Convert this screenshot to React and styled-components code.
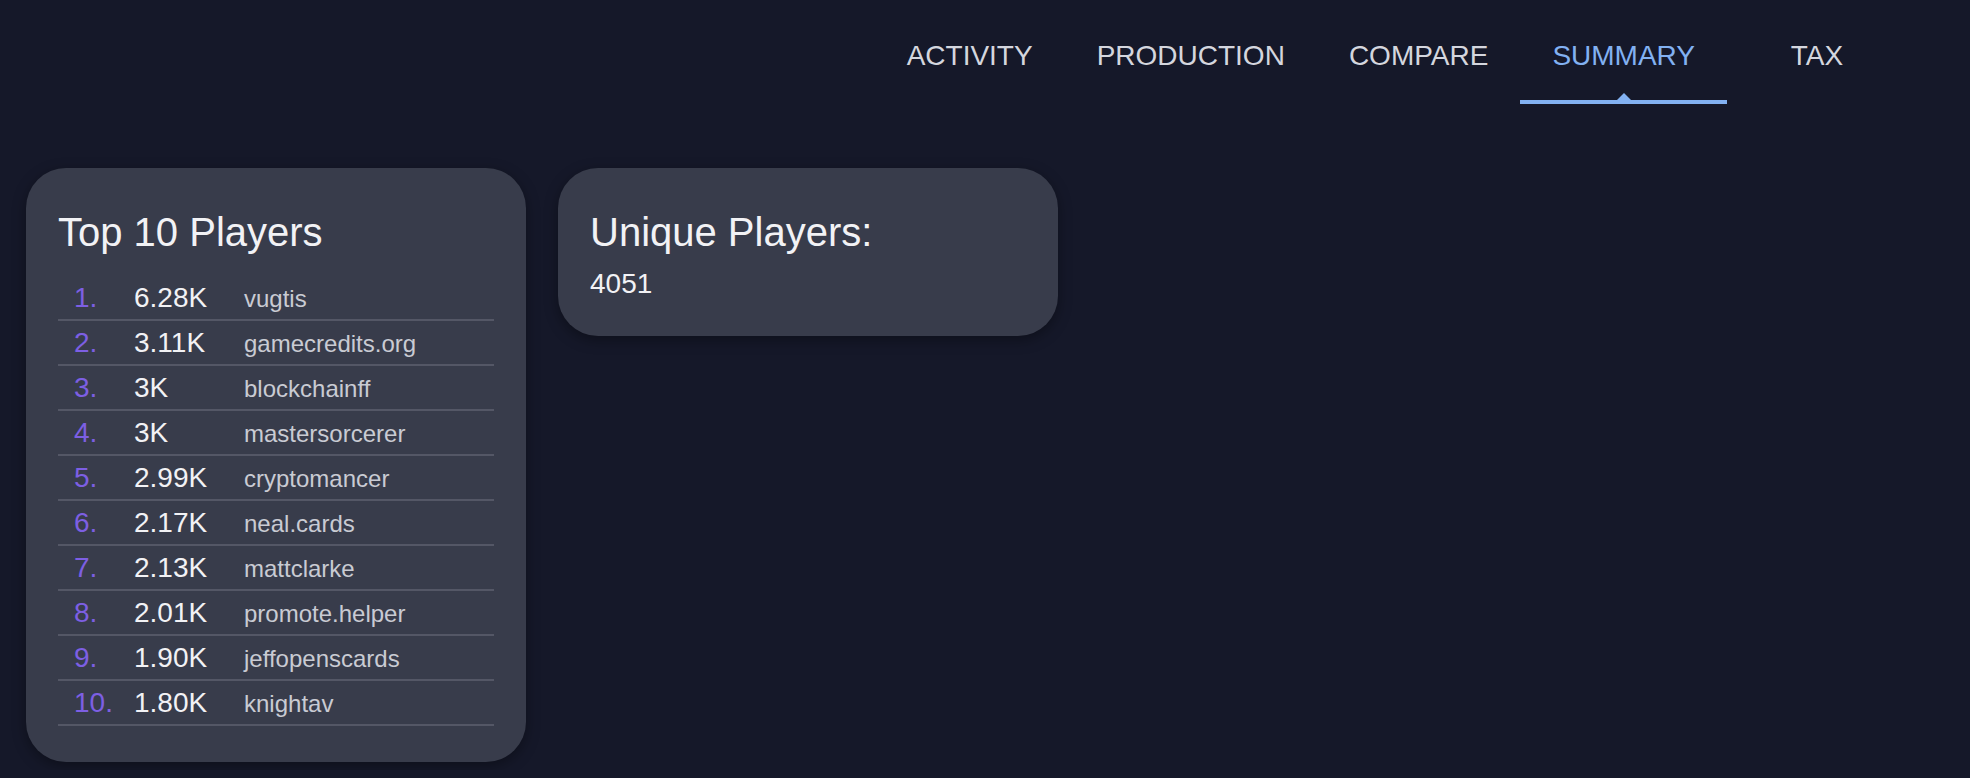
import React from "react";
import styled, { createGlobalStyle } from "styled-components";

const GlobalStyle = createGlobalStyle`
  html, body {
    margin: 0;
    padding: 0;
    background: #151829;
    font-family: "Liberation Sans", Arial, sans-serif;
  }
`;

const Page = styled.div`
  background: #151829;
`;

const Nav = styled.nav`
  display: flex;
  justify-content: flex-end;
  padding: 12px 63px 0 0;
`;

const Tab = styled.div`
  position: relative;
  box-sizing: border-box;
  min-width: 180px;
  height: 92px;
  padding: 0 32px;
  display: flex;
  align-items: center;
  justify-content: center;
  font-size: 28px;
  text-transform: uppercase;
  color: ${(p) => (p.$active ? "#82b1f2" : "#d4d6de")};
  border-bottom: 4px solid ${(p) => (p.$active ? "#82b1f2" : "transparent")};
  cursor: pointer;
`;

const Pointer = styled.span`
  position: absolute;
  left: 50%;
  bottom: 0;
  transform: translateX(-50%);
  width: 0;
  height: 0;
  border-left: 7px solid transparent;
  border-right: 7px solid transparent;
  border-bottom: 7px solid #82b1f2;
`;

const Main = styled.main`
  display: flex;
  align-items: flex-start;
  gap: 32px;
  padding: 64px 26px 8px;
`;

const Card = styled.section`
  box-sizing: border-box;
  width: 500px;
  padding: 32px 32px 36px;
  border-radius: 40px;
  background: #383c4b;
  box-shadow: 0 4px 14px rgba(0, 0, 0, 0.35);
`;

const Title = styled.h2`
  margin: 9px 0 0;
  font-size: 40px;
  line-height: 46px;
  font-weight: 400;
  color: #f2f2f5;
`;

const List = styled.ol`
  list-style: none;
  margin: 21px 0 0;
  padding: 0;
`;

const Row = styled.li`
  box-sizing: border-box;
  height: 45px;
  display: grid;
  grid-template-columns: 60px 110px 1fr;
  align-items: baseline;
  align-content: center;
  padding-left: 16px;
  border-bottom: 2px solid #545766;
`;

const Rank = styled.span`
  font-size: 28px;
  line-height: 32px;
  color: #7d5fe3;
`;

const Amount = styled.span`
  font-size: 28px;
  line-height: 32px;
  color: #f2f2f5;
`;

const Name = styled.span`
  font-size: 24px;
  line-height: 28px;
  color: #c9cbd3;
`;

const Value = styled.div`
  margin-top: 13px;
  font-size: 28px;
  line-height: 32px;
  color: #f2f2f5;
`;

const tabs = ["Activity", "Production", "Compare", "Summary", "Tax"];

const players = [
  ["6.28K", "vugtis"],
  ["3.11K", "gamecredits.org"],
  ["3K", "blockchainff"],
  ["3K", "mastersorcerer"],
  ["2.99K", "cryptomancer"],
  ["2.17K", "neal.cards"],
  ["2.13K", "mattclarke"],
  ["2.01K", "promote.helper"],
  ["1.90K", "jeffopenscards"],
  ["1.80K", "knightav"],
];

export default function App() {
  return (
    <Page>
      <GlobalStyle />
      <Nav>
        {tabs.map((t) => (
          <Tab key={t} $active={t === "Summary"}>
            {t}
            {t === "Summary" && <Pointer />}
          </Tab>
        ))}
      </Nav>
      <Main>
        <Card>
          <Title>Top 10 Players</Title>
          <List>
            {players.map(([amt, name], i) => (
              <Row key={name}>
                <Rank>{i + 1}.</Rank>
                <Amount>{amt}</Amount>
                <Name>{name}</Name>
              </Row>
            ))}
          </List>
        </Card>
        <Card>
          <Title>Unique Players:</Title>
          <Value>4051</Value>
        </Card>
      </Main>
    </Page>
  );
}
